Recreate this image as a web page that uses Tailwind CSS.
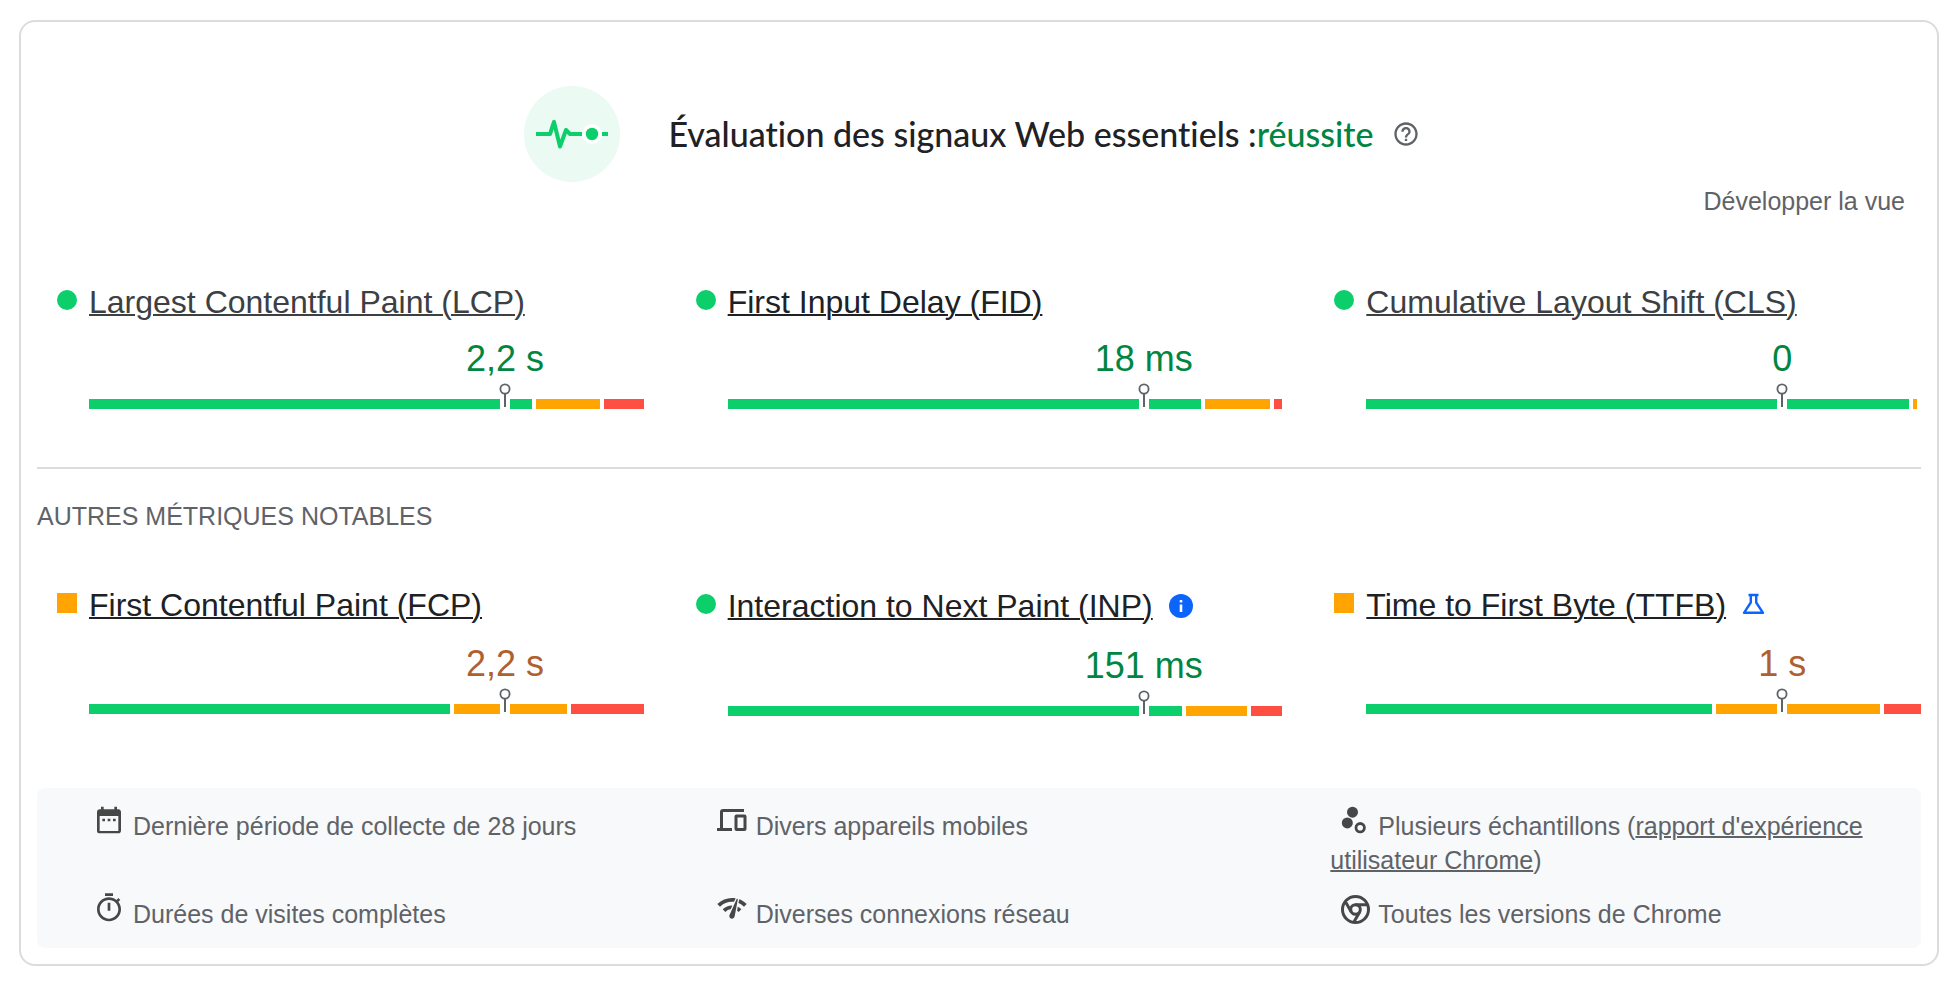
<!DOCTYPE html>
<html lang="fr">
<head>
    <meta charset="utf-8">
    <meta name="viewport" content="width=device-width, initial-scale=1">
    <title>Signaux Web essentiels</title>
    <script src="https://cdn.jsdelivr.net/npm/@tailwindcss/browser@4"></script>
</head>
<body class="bg-white font-['Liberation_Sans',Arial,sans-serif] text-[#202124]">
    <!-- Pin shown on every distribution bar -->
    <svg class="hidden" aria-hidden="true">
        <symbol id="pin" viewBox="0 0 12 24">
            <circle cx="6" cy="6" r="4.6" fill="#fff" stroke="#5f6368" stroke-width="1.8"/>
            <path d="M6 10.6V24" stroke="#5f6368" stroke-width="2"/>
        </symbol>
    </svg>

    <main class="mt-5 ml-[19px] mr-[17px] rounded-2xl border-2 border-[#dadce0] px-4 pt-16 pb-4">
        <header class="flex items-center justify-center">
            <svg class="size-24 shrink-0" viewBox="0 0 96 96" fill="none" aria-hidden="true">
                <circle cx="48" cy="48" r="48" fill="#ebfaf3"/>
                <path d="M12 48H26L30 36L36 60.500L42 44L46 48H58" stroke="#0cce6b" stroke-width="4" stroke-linejoin="round"/>
                <path d="M78 48H84" stroke="#0cce6b" stroke-width="4"/>
                <circle cx="68" cy="48" r="10" fill="#fff"/>
                <circle cx="68" cy="48" r="6.200" fill="#0cce6b"/>
            </svg>
            <h1 class="ml-12 font-['Lato',sans-serif] text-[34px] leading-10 font-medium [font-variant-ligatures:none]">Évaluation des signaux Web essentiels :<span class="text-[#018642]">réussite</span></h1>
            <button type="button" class="ml-[18px] mr-[14px]" aria-label="Aide">
                <svg class="size-7" viewBox="0 0 24 24" fill="#5f6368" aria-hidden="true"><path d="M11 18h2v-2h-2v2zm1-16C6.480 2 2 6.480 2 12s4.480 10 10 10 10-4.480 10-10S17.520 2 12 2zm0 18c-4.410 0-8-3.590-8-8s3.590-8 8-8 8 3.590 8 8-3.590 8-8 8zm0-14c-2.210 0-4 1.790-4 4h2c0-1.100.9-2 2-2s2 .9 2 2c0 2-3 1.750-3 5h2c0-2.250 3-2.500 3-5 0-2.210-1.790-4-4-4z"/></svg>
            </button>
        </header>

        <div class="mt-[2px] flex justify-end pr-4">
            <button type="button" class="text-[25px] leading-[34px] text-[#5f6368]">Développer la vue</button>
        </div>

        <section class="mt-16 grid grid-cols-3 items-start gap-8">
            <article>
                <h2 class="flex h-10 items-center gap-3 pl-5">
                    <span class="mb-1 size-5 rounded-full bg-[#0cce6b]"></span>
                    <a href="#lcp" class="text-[32px] leading-10 text-[#3c4043] underline decoration-2">Largest Contentful Paint (LCP)</a>
                </h2>
                <div class="mt-[15px] pl-[52px]">
                    <p class="ml-[50%] text-center text-4xl leading-[44px] text-[#018642]">2,2 s</p>
                    <div class="relative mt-[18px] flex h-[10px] gap-1">
                        <span class="basis-0 bg-[#0cce6b]" style="flex-grow:443"></span>
                        <span class="basis-0 bg-[#ffa400]" style="flex-grow:64"></span>
                        <span class="basis-0 bg-[#ff4e42]" style="flex-grow:40"></span>
                        <span class="absolute inset-y-0 left-3/4 -ml-[5px] w-[10px] bg-white"><svg class="absolute -top-4 -left-px h-6 w-3"><use href="#pin"/></svg></span>
                    </div>
                </div>
            </article>
            <article>
                <h2 class="flex h-10 items-center gap-3 pl-5">
                    <span class="mb-1 size-5 rounded-full bg-[#0cce6b]"></span>
                    <a href="#fid" class="text-[32px] leading-10 underline decoration-2">First Input Delay (FID)</a>
                </h2>
                <div class="mt-[15px] pl-[52px]">
                    <p class="ml-[50%] text-center text-4xl leading-[44px] text-[#018642]">18 ms</p>
                    <div class="relative mt-[18px] flex h-[10px] gap-1">
                        <span class="basis-0 bg-[#0cce6b]" style="flex-grow:473"></span>
                        <span class="basis-0 bg-[#ffa400]" style="flex-grow:65"></span>
                        <span class="basis-0 bg-[#ff4e42]" style="flex-grow:8"></span>
                        <span class="absolute inset-y-0 left-3/4 -ml-[5px] w-[10px] bg-white"><svg class="absolute -top-4 -left-px h-6 w-3"><use href="#pin"/></svg></span>
                    </div>
                </div>
            </article>
            <article>
                <h2 class="flex h-10 items-center gap-3 pl-5">
                    <span class="mb-1 size-5 rounded-full bg-[#0cce6b]"></span>
                    <a href="#cls" class="text-[32px] leading-10 text-[#3c4043] underline decoration-2">Cumulative Layout Shift (CLS)</a>
                </h2>
                <div class="mt-[15px] pl-[52px]">
                    <p class="ml-[50%] text-center text-4xl leading-[44px] text-[#018642]">0</p>
                    <div class="relative mt-[18px] flex h-[10px] gap-1">
                        <span class="basis-0 bg-[#0cce6b]" style="flex-grow:543"></span>
                        <span class="basis-0 bg-[#ffa400]" style="flex-grow:4"></span>
                        <span class="basis-0 bg-[#ff4e42]" style="flex-grow:0"></span>
                        <span class="absolute inset-y-0 left-3/4 -ml-[5px] w-[10px] bg-white"><svg class="absolute -top-4 -left-px h-6 w-3"><use href="#pin"/></svg></span>
                    </div>
                </div>
            </article>
        </section>

        <hr class="mt-[58px] border-t-2 border-[#dadce0]">
        <h2 class="mt-[30px] text-[25px] leading-[34px] text-[#5f6368] uppercase">Autres métriques notables</h2>

        <section class="mt-[50px] grid grid-cols-3 items-start gap-8">
            <article>
                <h3 class="flex h-[43px] items-center gap-3 pl-5">
                    <span class="mb-1 size-5 bg-[#ffa400]"></span>
                    <a href="#fcp" class="text-[32px] leading-10 underline decoration-2">First Contentful Paint (FCP)</a>
                </h3>
                <div class="mt-4 pl-[52px]">
                    <p class="ml-[50%] text-center text-4xl leading-[44px] text-[#b0602f]">2,2 s</p>
                    <div class="relative mt-[18px] flex h-[10px] gap-1">
                        <span class="basis-0 bg-[#0cce6b]" style="flex-grow:361"></span>
                        <span class="basis-0 bg-[#ffa400]" style="flex-grow:113"></span>
                        <span class="basis-0 bg-[#ff4e42]" style="flex-grow:73"></span>
                        <span class="absolute inset-y-0 left-3/4 -ml-[5px] w-[10px] bg-white"><svg class="absolute -top-4 -left-px h-6 w-3"><use href="#pin"/></svg></span>
                    </div>
                </div>
            </article>
            <article>
                <h3 class="flex h-[45px] items-center gap-3 pl-5">
                    <span class="mb-1 size-5 rounded-full bg-[#0cce6b]"></span>
                    <a href="#inp" class="text-[32px] leading-10 underline decoration-2">Interaction to Next Paint (INP)</a>
                    <svg class="ml-1 size-6" viewBox="0 0 24 24" aria-hidden="true">
                        <circle cx="12" cy="12" r="12" fill="#0b65fb"/>
                        <path d="M12 6V8.600M12 10.500V18" stroke="#fff" stroke-width="2.600"/>
                    </svg>
                </h3>
                <div class="mt-4 pl-[52px]">
                    <p class="ml-[50%] text-center text-4xl leading-[44px] text-[#018642]">151 ms</p>
                    <div class="relative mt-[18px] flex h-[10px] gap-1">
                        <span class="basis-0 bg-[#0cce6b]" style="flex-grow:454"></span>
                        <span class="basis-0 bg-[#ffa400]" style="flex-grow:61"></span>
                        <span class="basis-0 bg-[#ff4e42]" style="flex-grow:31"></span>
                        <span class="absolute inset-y-0 left-3/4 -ml-[5px] w-[10px] bg-white"><svg class="absolute -top-4 -left-px h-6 w-3"><use href="#pin"/></svg></span>
                    </div>
                </div>
            </article>
            <article>
                <h3 class="flex h-[43px] items-center gap-3 pl-5">
                    <span class="mb-1 size-5 bg-[#ffa400]"></span>
                    <a href="#ttfb" class="text-[32px] leading-10 underline decoration-2">Time to First Byte (TTFB)</a>
                    <svg class="ml-1 size-6" viewBox="0 0 24 24" fill="none" stroke="#0b65fb" stroke-width="2.400" stroke-linejoin="round" aria-hidden="true">
                        <path d="M6.500 2H16.500M8.800 2V9.500L2 19.800H21L14.200 9.500V2"/>
                    </svg>
                </h3>
                <div class="mt-4 pl-[52px]">
                    <p class="ml-[50%] text-center text-4xl leading-[44px] text-[#b0602f]">1 s</p>
                    <div class="relative mt-[18px] flex h-[10px] gap-1">
                        <span class="basis-0 bg-[#0cce6b]" style="flex-grow:346"></span>
                        <span class="basis-0 bg-[#ffa400]" style="flex-grow:164"></span>
                        <span class="basis-0 bg-[#ff4e42]" style="flex-grow:37"></span>
                        <span class="absolute inset-y-0 left-3/4 -ml-[5px] w-[10px] bg-white"><svg class="absolute -top-4 -left-px h-6 w-3"><use href="#pin"/></svg></span>
                    </div>
                </div>
            </article>
        </section>

        <!-- How the data was collected -->
        <ul class="mt-[72px] grid grid-cols-3 gap-y-[15px] rounded-lg bg-[#f8f9fb] px-2 pt-4 pb-[17px] text-[25px] leading-[34px] text-[#5f6368]">
            <li class="pl-10">
                <svg class="mx-2 inline size-8 align-[-1px]" viewBox="0 0 24 24" fill="#474747" aria-hidden="true"><path d="M7 11h2v2H7zM11 11h2v2h-2zM15 11h2v2h-2zM19 4h-1V2h-2v2H8V2H6v2H5c-1.100 0-2 .9-2 2v14a2 2 0 0 0 2 2h14c1.100 0 2-.9 2-2V6c0-1.100-.9-2-2-2zm0 16.300H5V9h14z"/></svg>Dernière période de collecte de 28 jours
            </li>
            <li class="pl-10">
                <svg class="mx-2 inline size-8 align-[-1px]" viewBox="0 0 32 32" fill="none" stroke="#474747" stroke-width="3" aria-hidden="true">
                    <path d="M28 6.500H7Q5.500 6.500 5.500 8V25M1 25.500H16"/>
                    <rect x="20" y="12" width="9" height="13.500" rx=".5"/>
                </svg>Divers appareils mobiles
            </li>
            <li class="pl-10">
                <svg class="mx-2 inline size-8 align-[-1px]" viewBox="0 0 32 32" fill="#474747" aria-hidden="true">
                    <circle cx="14.500" cy="8.200" r="5.500"/>
                    <circle cx="9.300" cy="18.900" r="5.500"/>
                    <circle cx="22.200" cy="23.700" r="4.200" fill="none" stroke="#474747" stroke-width="2.800"/>
                </svg>Plusieurs échantillons (<a href="#crux" class="underline decoration-2">rapport d'expérience utilisateur Chrome</a>)
            </li>
            <li class="pl-10">
                <svg class="mx-2 inline size-8 align-[-1px]" viewBox="0 0 24 24" fill="#474747" aria-hidden="true"><path d="M15 1H9v2h6V1zm-4 13h2V8h-2v6zm8.030-6.610l1.420-1.420c-.43-.51-.9-.99-1.410-1.410l-1.420 1.420C16.070 4.740 14.120 4 12 4c-4.970 0-9 4.030-9 9s4.020 9 9 9 9-4.030 9-9c0-2.120-.74-4.070-1.970-5.610zM12 20c-3.870 0-7-3.130-7-7s3.130-7 7-7 7 3.130 7 7-3.130 7-7 7z"/></svg>Durées de visites complètes
            </li>
            <li class="pl-10">
                <svg class="mx-2 inline size-8 align-[-1px]" viewBox="0 0 24 24" fill="#474747" aria-hidden="true"><path d="M15.900 5c-.17 0-.32.09-.41.23l-.07.15-5.180 11.650c-.16.29-.26.61-.26.96 0 1.110.9 2.010 2.010 2.010.96 0 1.770-.68 1.960-1.590l.01-.03L16.400 5.500c0-.28-.22-.5-.5-.5zM1 9l2 2c2.880-2.880 6.790-4.080 10.530-3.620l1.190-2.680C9.890 3.840 4.740 5.270 1 9zm20 2l2-2c-1.640-1.640-3.550-2.820-5.590-3.570l-.53 2.820c1.500.62 2.900 1.530 4.120 2.750zm-4 4l2-2c-.8-.8-1.700-1.420-2.660-1.890l-.55 2.920c.42.27.83.59 1.210.97zM5 13l2 2c1.130-1.130 2.560-1.790 4.030-2l1.280-2.880c-2.630-.08-5.300.87-7.310 2.880z"/></svg>Diverses connexions réseau
            </li>
            <li class="pl-10">
                <svg class="mx-2 inline size-8 align-[-1px]" viewBox="0 0 32 32" fill="none" stroke="#474747" stroke-width="3" aria-hidden="true">
                    <circle cx="17.500" cy="17.500" r="13"/>
                    <circle cx="17.500" cy="17.500" r="4.800"/>
                    <path d="M17.500 12.700H29.500M13.300 19.900L7.300 9.600M21.700 19.900L15.600 30.400"/>
                </svg>Toutes les versions de Chrome
            </li>
        </ul>
    </main>
</body>
</html>
